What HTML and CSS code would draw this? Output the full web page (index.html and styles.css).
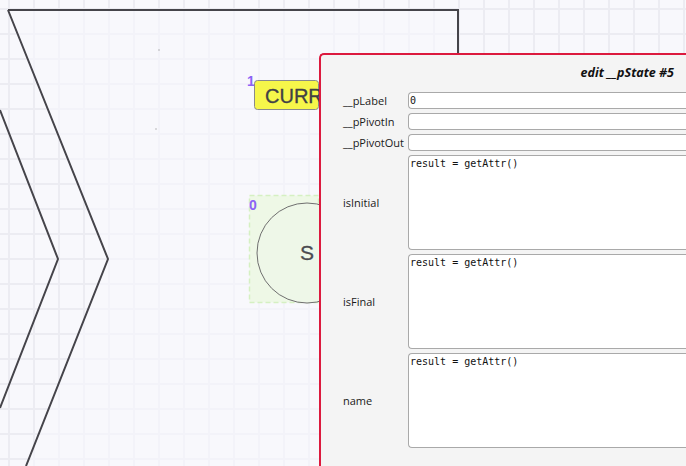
FILE: index.html
```html
<!DOCTYPE html>
<html>
<head>
<meta charset="utf-8">
<link rel="stylesheet" href="styles.css">
</head>
<body>
<div class="canvas">
  <svg class="diagram" width="686" height="466" viewBox="0 0 686 466" xmlns="http://www.w3.org/2000/svg">
    <path class="shape" d="M8 10 L458 10 L458 466 L28 466 L108 259 Z"/>
    <path class="edge" d="M8 10 L458 10 L458 80"/>
    <path class="edge" d="M8 10 L108 259 L26 466"/>
    <path class="edge" d="M0 110 L58 259 L0 408"/>
    <rect class="dot" x="158.5" y="49.5" width="1" height="1"/>
    <rect class="dot" x="155.5" y="128.5" width="1" height="1"/>

    <text class="idx" x="247" y="86">1</text>
    <rect class="label-box" x="254.5" y="80.5" width="64" height="29" rx="3"/>
    <text class="label-text" x="265" y="103">CURR</text>

    <rect class="state-box" x="249.5" y="195.5" width="69" height="107"/>
    <text class="idx" x="249" y="210">0</text>
    <circle class="state" cx="307" cy="253" r="50"/>
    <text class="state-text" x="307" y="260">S</text>
  </svg>

  <div class="panel">
    <div class="panel-title">edit __pState #5</div>
    <div class="form">
      <div class="row">
        <label class="lbl">__pLabel</label>
        <input class="field" type="text" value="0">
      </div>
      <div class="row">
        <label class="lbl">__pPivotIn</label>
        <input class="field" type="text" value="">
      </div>
      <div class="row">
        <label class="lbl">__pPivotOut</label>
        <input class="field" type="text" value="">
      </div>
      <div class="row">
        <label class="lbl">isInitial</label>
        <textarea class="area">result = getAttr()</textarea>
      </div>
      <div class="row">
        <label class="lbl">isFinal</label>
        <textarea class="area">result = getAttr()</textarea>
      </div>
      <div class="row">
        <label class="lbl">name</label>
        <textarea class="area">result = getAttr()</textarea>
      </div>
    </div>
  </div>
</div>
</body>
</html>
```

FILE: styles.css
```css
html, body {
  margin: 0;
  padding: 0;
  width: 686px;
  height: 466px;
  overflow: hidden;
}

body {
  background-color: #f8f8fc;
  background-image:
    linear-gradient(to right, #ececf2 2px, transparent 2px),
    linear-gradient(to bottom, #ececf2 2px, transparent 2px);
  background-size: 25px 25px;
  background-position: 8px 8px;
  font-family: "Open Sans", "Liberation Sans", sans-serif;
}

.canvas {
  position: relative;
  width: 686px;
  height: 466px;
  overflow: hidden;
}

.diagram {
  position: absolute;
  left: 0;
  top: 0;
}

.shape {
  fill: #f8f8fc;
  fill-opacity: 0.65;
  stroke: none;
}

.edge {
  fill: none;
  stroke: #45444a;
  stroke-width: 2;
  stroke-linejoin: miter;
}

.dot {
  fill: #777;
}

.idx {
  font-family: "Liberation Sans", Arial, sans-serif;
  font-weight: bold;
  font-size: 14px;
  fill: #8c63f5;
}

.label-box {
  fill: #f6f64a;
  stroke: #8a8a8a;
  stroke-width: 1;
}

.label-text {
  font-family: "Liberation Sans", Arial, sans-serif;
  font-size: 20px;
  fill: #404045;
  stroke: #404045;
  stroke-width: 0.3;
}

.state-box {
  fill: #eef8e6;
  stroke: #d5f0c2;
  stroke-width: 1.5;
  stroke-dasharray: 5 3;
}

.state {
  fill: #eef7e8;
  stroke: #6f6f6f;
  stroke-width: 1;
}

.state-text {
  font-family: "Liberation Sans", Arial, sans-serif;
  font-size: 21px;
  fill: #4a4a50;
  stroke: #4a4a50;
  stroke-width: 0.3;
  text-anchor: middle;
}

.panel {
  position: absolute;
  left: 319px;
  top: 53px;
  right: 0;
  bottom: 0;
  box-sizing: border-box;
  background: #f4f4f4;
  border: 2px solid #dc1a3e;
  border-right: none;
  border-bottom: none;
  border-top-left-radius: 5px;
  padding: 10px 0 0 22px;
}

.panel-title {
  font-family: "Open Sans", "Liberation Sans", sans-serif;
  font-weight: bold;
  font-style: italic;
  font-size: 12.5px;
  line-height: 16px;
  color: #111;
  text-align: right;
  padding-right: 12px;
  margin-bottom: 11px;
}

.form {
  display: flex;
  flex-direction: column;
  gap: 4px;
}

.row {
  display: flex;
  align-items: center;
}

.lbl {
  width: 65px;
  flex: none;
  font-size: 11px;
  color: #1a1a1a;
  line-height: 14px;
}

.field,
.area {
  flex: 1;
  min-width: 0;
  margin: 0;
  box-sizing: border-box;
  background: #fff;
  border: 1px solid #a9a9a9;
  border-right: none;
  border-radius: 4px 0 0 4px;
  font-family: "DejaVu Sans Mono", "Liberation Mono", monospace;
  font-size: 10px;
  color: #111;
  outline: none;
}

.field {
  height: 17px;
  padding: 0 1px;
}

.area {
  height: 95px;
  padding: 1px 1px;
  resize: none;
  line-height: 13px;
  overflow: hidden;
}
```
